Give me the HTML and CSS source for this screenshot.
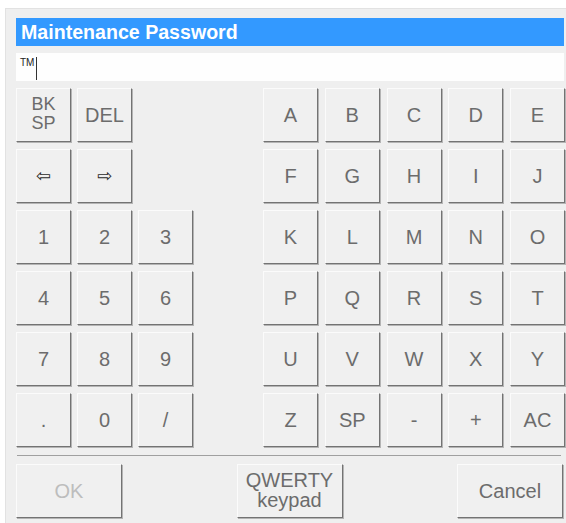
FILE: index.html
```html
<!DOCTYPE html>
<html lang="en">
<head>
<meta charset="utf-8">
<title>Maintenance Password</title>
<link rel="stylesheet" href="styles.css">
</head>
<body>
<div class="panel">
  <div class="title">Maintenance Password</div>
  <div class="entry"><span class="value">TM</span><span class="caret"></span></div>

  <div class="keys">
    <div class="pad pad-num">
      <button class="key two-line">BK<br>SP</button>
      <button class="key">DEL</button>
      <span class="blank"></span>
      <button class="key arrow">&#x21E6;</button>
      <button class="key arrow">&#x21E8;</button>
      <span class="blank"></span>
      <button class="key">1</button>
      <button class="key">2</button>
      <button class="key">3</button>
      <button class="key">4</button>
      <button class="key">5</button>
      <button class="key">6</button>
      <button class="key">7</button>
      <button class="key">8</button>
      <button class="key">9</button>
      <button class="key">.</button>
      <button class="key">0</button>
      <button class="key">/</button>
    </div>
    <div class="pad pad-alpha">
      <button class="key">A</button>
      <button class="key">B</button>
      <button class="key">C</button>
      <button class="key">D</button>
      <button class="key">E</button>
      <button class="key">F</button>
      <button class="key">G</button>
      <button class="key">H</button>
      <button class="key">I</button>
      <button class="key">J</button>
      <button class="key">K</button>
      <button class="key">L</button>
      <button class="key">M</button>
      <button class="key">N</button>
      <button class="key">O</button>
      <button class="key">P</button>
      <button class="key">Q</button>
      <button class="key">R</button>
      <button class="key">S</button>
      <button class="key">T</button>
      <button class="key">U</button>
      <button class="key">V</button>
      <button class="key">W</button>
      <button class="key">X</button>
      <button class="key">Y</button>
      <button class="key">Z</button>
      <button class="key">SP</button>
      <button class="key">-</button>
      <button class="key">+</button>
      <button class="key">AC</button>
    </div>
  </div>

  <div class="rule"></div>

  <div class="actions">
    <button class="key wide" disabled>OK</button>
    <button class="key wide two-line qwerty">QWERTY<br>keypad</button>
    <button class="key wide">Cancel</button>
  </div>
</div>
</body>
</html>
```

FILE: styles.css
```css
html, body {
  margin: 0;
  padding: 0;
  background: #ffffff;
}

body {
  font-family: "Liberation Sans", Arial, sans-serif;
}

.panel {
  box-sizing: border-box;
  width: 561px;
  height: 515px;
  margin: 8px 0 0 5px;
  padding: 9px 2px 0 10px;
  background: #efefef;
  border-top: 1px solid #e2e2e2;
  border-left: 1px solid #e2e2e2;
}

.title {
  height: 28px;
  line-height: 29px;
  padding-left: 5px;
  background: #3399ff;
  color: #ffffff;
  font-size: 19.6px;
  font-weight: bold;
}

.entry {
  display: flex;
  align-items: flex-start;
  height: 28px;
  margin-top: 7px;
  padding-left: 4px;
  background: #fefefe;
}

.value {
  margin-top: 5px;
  font-size: 10px;
  line-height: 10px;
  color: #222222;
}

.caret {
  width: 1px;
  height: 23px;
  margin: 4px 0 0 2px;
  background: #333333;
}

.keys {
  display: flex;
  justify-content: space-between;
  margin-top: 7px;
  width: 549px;
}

.pad {
  display: grid;
  grid-auto-rows: 54px;
  row-gap: 7px;
}

.pad-num {
  grid-template-columns: repeat(3, 55px);
  column-gap: 6px;
}

.pad-alpha {
  grid-template-columns: repeat(5, 55px);
  column-gap: 6.75px;
}

.key {
  box-sizing: border-box;
  width: 55px;
  height: 54px;
  margin: 0;
  padding: 0;
  background: #f0f0f0;
  border-style: solid;
  border-width: 1px;
  border-color: #fbfbfb #737373 #737373 #fbfbfb;
  box-shadow: 1px 1px 0 #b4b4b4;
  color: #6c6c6c;
  font-family: "Liberation Sans", Arial, sans-serif;
  font-size: 20px;
  line-height: 20px;
  text-align: center;
}

.key.two-line {
  font-size: 18px;
  line-height: 19px;
  padding-bottom: 2px;
}

.key.qwerty {
  font-size: 20px;
  line-height: 20px;
  padding-bottom: 2px;
}

.key.arrow {
  font-family: "DejaVu Sans", sans-serif;
  font-size: 18px;
  color: #2a2a2a;
}

.key:disabled {
  color: #bdbdbd;
}

.rule {
  width: 544px;
  height: 1px;
  margin: 8px 0 0 1px;
  background: #a0a0a0;
}

.actions {
  display: flex;
  justify-content: space-between;
  width: 547px;
  margin-top: 8px;
}

.key.wide {
  width: 106px;
}
```
